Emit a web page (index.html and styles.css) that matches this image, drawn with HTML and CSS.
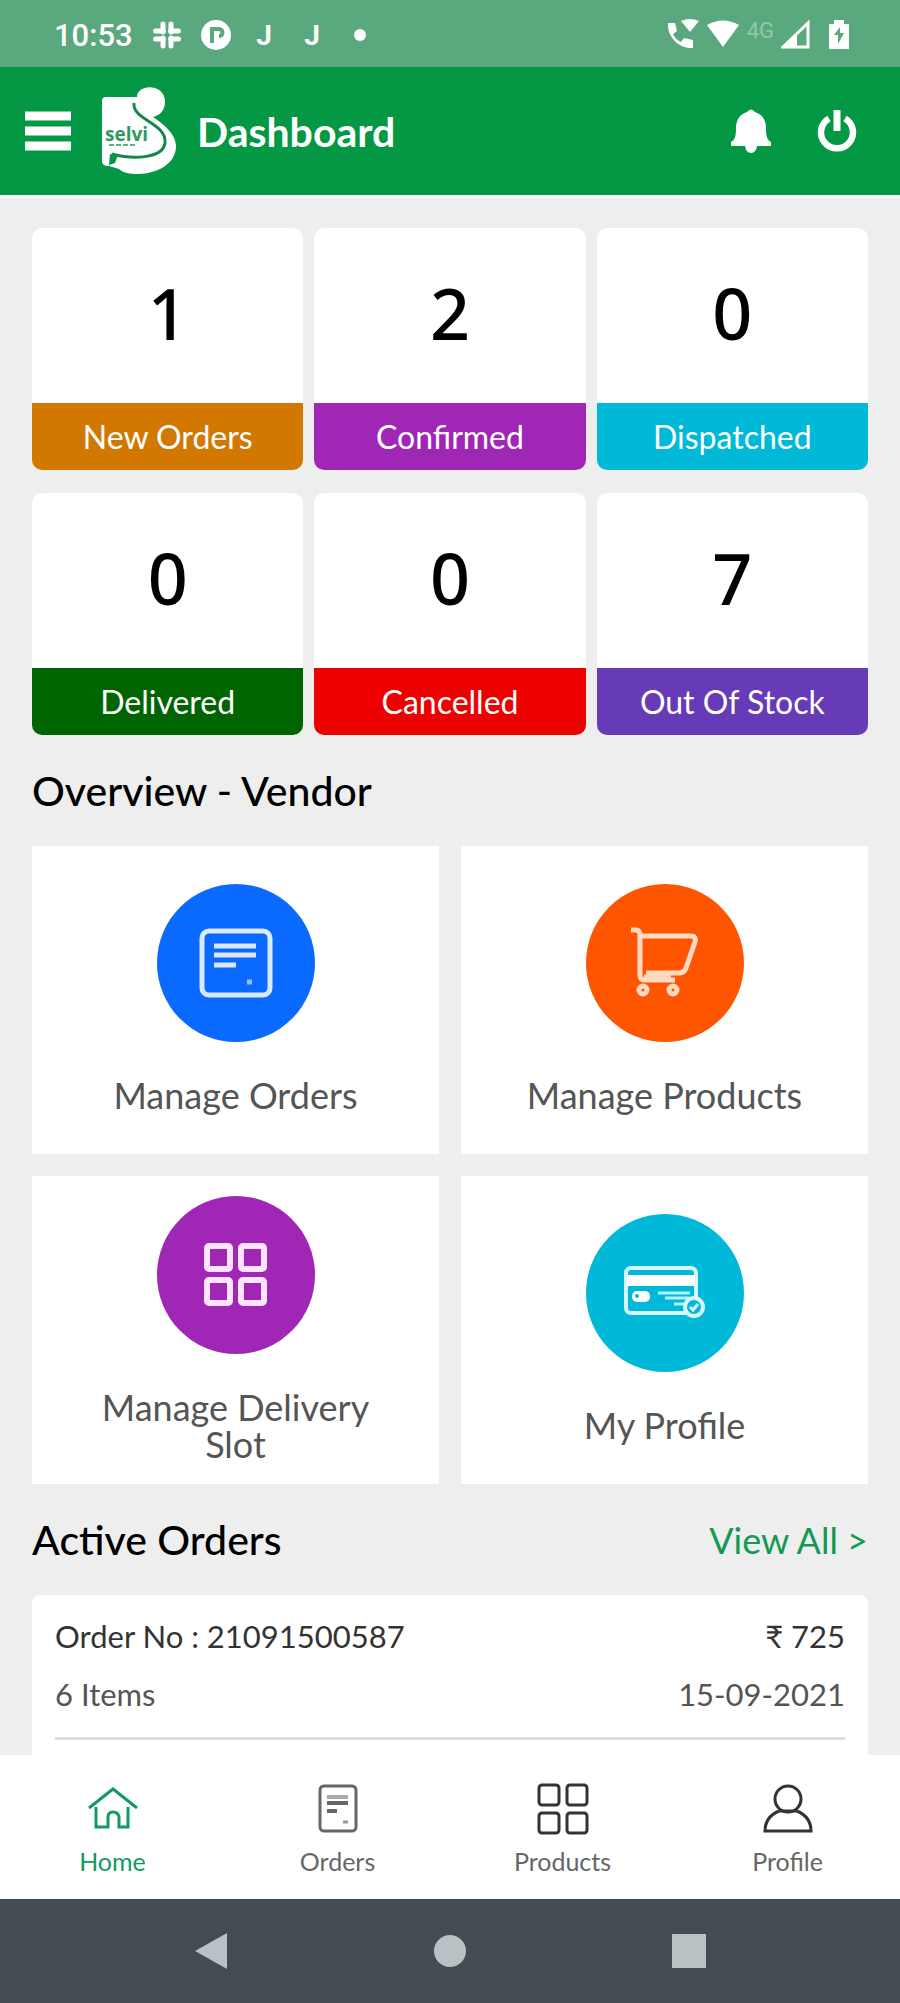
FILE: index.html
```html
<!DOCTYPE html>
<html lang="en">
<head>
<meta charset="utf-8">
<meta name="viewport" content="width=device-width, initial-scale=1">
<title>Dashboard</title>
<link rel="stylesheet" href="styles.css">
</head>
<body>
<div class="status">
  <span class="status-time">10:53</span>
  <svg class="status-icon" viewBox="0 0 30 30" aria-hidden="true"><g stroke="#fff" stroke-width="5" stroke-linecap="round"><path d="M11 4v8M19 18v8M3.500 19h8M18.500 11h8M3.500 11h8M18.500 19h8M11 18v8M19 4v8"/></g></svg>
  <svg class="status-icon" viewBox="0 0 30 30" aria-hidden="true"><circle cx="15" cy="15" r="15" fill="#fff"/><path d="M11 23V9h7a3 3 0 0 1 0 7" fill="none" stroke="#5aa87d" stroke-width="4"/></svg>
  <span class="status-letter">J</span>
  <span class="status-letter">J</span>
  <span class="status-letter"><span class="status-dot"></span></span>
  <span class="status-right">
    <svg width="32" height="32" viewBox="0 0 32 32" aria-hidden="true"><path d="M1 4h7l2 8-4 3c2 4 4 6 8 8l3-4 9 2v8C12 30 0 18 1 4z" fill="#fff"/><path d="M14 2q9-4 18 0l-9 11z" fill="#fff"/></svg>
    <svg width="34" height="32" viewBox="0 0 34 32" aria-hidden="true"><path d="M1 6Q17-3 33 6L17 28z" fill="#fff"/></svg>
    <span class="status-net">4G</span>
    <svg width="30" height="32" viewBox="0 0 30 32" aria-hidden="true"><path d="M2 28L27 4v24z" fill="none" stroke="#fff" stroke-width="3"/><path d="M2 28l14-13v13z" fill="#fff"/></svg>
    <svg class="status-battery" width="22" height="32" viewBox="0 0 22 32" aria-hidden="true"><path d="M1 5h5V1h10v4h5v25H1z" fill="#fff"/><path d="M12 8l-6 8h4v9l6-11h-4z" fill="#5aa87d"/></svg>
  </span>
</div>

<header class="appbar">
  <button class="icon-button" type="button" aria-label="Menu"><svg width="48" height="42" viewBox="0 0 48 42"><path d="M1 6h46M1 21h46M1 36h46" stroke="#fff" stroke-width="9"/></svg></button>
  <svg class="logo" width="76" height="88" viewBox="0 0 76 88" role="img" aria-label="Logo">
    <path d="M5 10h31C36-3 63-4 64 14c0 10-5 14-12 16 12 8 22 17 23 28 1 17-17 29-38 29-8 0-15-1-19-5L8 79c-4 0-7-1-7-5V14q0-4 4-4z" fill="#fff"/>
    <path d="M33 16c-2 17 33 20 31 40-2 15-30 17-53 11" fill="none" stroke="#16864a" stroke-width="3"/>
    <path d="M9 67l8 1-3 8-6 2z" fill="#049744"/>
    <text class="logo-text" x="4" y="54">selvi</text>
    <path d="M8 58h27" stroke="#5ab182" stroke-width="2" stroke-dasharray="5 2"/>
  </svg>
  <h1 class="appbar-title">Dashboard</h1>
  <button class="icon-button" type="button" aria-label="Notifications"><svg width="42" height="44" viewBox="0 0 42 44"><path d="M17 3q4-5 8 0c7 2 11 8 11 16 0 8 1 12 5 14v4H1v-4c4-2 5-6 5-14C6 11 10 5 17 3z" fill="#fff"/><path d="M15 37h12q-1 7-6 7t-6-7z" fill="#fff"/></svg></button>
  <button class="icon-button" type="button" aria-label="Log out"><svg width="42" height="44" viewBox="0 0 42 44"><path d="M13 9.500a16 16 0 1 0 16 0" fill="none" stroke="#fff" stroke-width="6.500"/><path d="M21 1v21" stroke="#fff" stroke-width="7"/></svg></button>
</header>

<main class="content">
  <section class="stats" aria-label="Order counts">
    <div class="stat"><strong class="stat-value">1</strong><span class="stat-label new">New Orders</span></div>
    <div class="stat"><strong class="stat-value">2</strong><span class="stat-label confirmed">Confirmed</span></div>
    <div class="stat"><strong class="stat-value">0</strong><span class="stat-label dispatched">Dispatched</span></div>
    <div class="stat"><strong class="stat-value">0</strong><span class="stat-label delivered">Delivered</span></div>
    <div class="stat"><strong class="stat-value">0</strong><span class="stat-label cancelled">Cancelled</span></div>
    <div class="stat"><strong class="stat-value">7</strong><span class="stat-label stock">Out Of Stock</span></div>
  </section>

  <div class="section-head"><h2 class="section-title">Overview - Vendor</h2></div>
  <nav class="tiles" aria-label="Overview">
    <a class="tile" href="#orders"><span class="disc blue"><svg width="74" height="70" viewBox="0 0 74 70" fill="none" stroke="#d9e9ff"><rect x="3" y="3" width="68" height="64" rx="7" stroke-width="5"/><path d="M15 18h42M15 27h42M15 37h22" stroke-width="5"/><path d="M48 54h5" stroke-width="5" stroke="#8fc0ff"/></svg></span>Manage Orders</a>
    <a class="tile" href="#products"><span class="disc orange"><svg width="70" height="72" viewBox="0 0 70 72" fill="none" stroke="#ffd9c2" stroke-width="5"><path d="M1 3h5q4 0 4 5v40q0 5 5 5h30"/><path d="M10 9h50q7 0 5 6L56 41q-2 5-7 5H16"/><path d="M14 51h27" stroke-width="7"/><circle cx="13" cy="63" r="4"/><circle cx="43" cy="63" r="4"/></svg></span>Manage Products</a>
    <a class="tile" href="#slots"><span class="disc purple"><svg width="64" height="64" viewBox="0 0 64 64" fill="none" stroke="#ffe3ff" stroke-width="6"><rect x="3" y="3" width="23" height="23" rx="2"/><rect x="37" y="3" width="23" height="23" rx="2"/><rect x="3" y="37" width="23" height="23" rx="2"/><rect x="37" y="37" width="23" height="23" rx="2"/></svg></span>Manage Delivery Slot</a>
    <a class="tile" href="#profile"><span class="disc cyan"><svg width="82" height="54" viewBox="0 0 82 54"><rect x="2" y="2" width="70" height="45" rx="5" fill="none" stroke="#d6f7ff" stroke-width="4"/><path d="M3 9h68v11H3z" fill="#fff"/><rect x="8" y="25" width="18" height="11" rx="5" fill="#fff"/><circle cx="13" cy="30" r="2" fill="#00b8d8"/><path d="M34 27h32M41 32h24M50 38h14" stroke="#b8f0fb" stroke-width="3"/><circle cx="70" cy="41" r="9" fill="#00b8d8" stroke="#d6f7ff" stroke-width="4"/><path d="M66 41l3 3 5-6" fill="none" stroke="#d6f7ff" stroke-width="3"/></svg></span>My Profile</a>
  </nav>

  <div class="section-head"><h2 class="section-title">Active Orders</h2><a class="view-all" href="#all">View All &gt;</a></div>
  <article class="order">
    <div class="order-body">
      <div class="order-row order-main"><span>Order No : 21091500587</span><span>₹ 725</span></div>
      <div class="order-row"><span>6 Items</span><time datetime="2021-09-15">15-09-2021</time></div>
    </div>
  </article>
</main>

<nav class="tabs" aria-label="Main">
  <a class="tab active" href="#home"><svg width="52" height="52" viewBox="0 0 52 52" fill="none" stroke="currentColor" stroke-width="3"><path d="M2 25L26 6l24 19"/><path d="M9 24v20h12V34q0-5 5-5t6 5v10h9V24"/></svg>Home</a>
  <a class="tab" href="#orders"><svg width="52" height="52" viewBox="0 0 52 52" fill="none" stroke="#666" stroke-width="3"><rect x="8" y="3" width="36" height="45" rx="4"/><path d="M15 14h21" stroke="#aaa" stroke-width="4"/><path d="M15 20h21M15 28h10" stroke-width="4"/><path d="M31 39h5" stroke="#999"/></svg>Orders</a>
  <a class="tab" href="#products"><svg width="52" height="52" viewBox="0 0 52 52" fill="none" stroke="#333" stroke-width="3"><rect x="2" y="2" width="20" height="20" rx="3"/><rect x="30" y="2" width="20" height="20" rx="3"/><rect x="2" y="30" width="20" height="20" rx="3"/><rect x="30" y="30" width="20" height="20" rx="3"/></svg>Products</a>
  <a class="tab" href="#profile"><svg width="52" height="52" viewBox="0 0 52 52" fill="none" stroke="#333" stroke-width="3"><circle cx="26" cy="16" r="13"/><path d="M17 28Q3 34 3 48h46Q49 34 35 28"/><path d="M17 28h18"/></svg>Profile</a>
</nav>

<div class="system">
  <button class="icon-button" type="button" aria-label="Back"><svg width="36" height="36" viewBox="0 0 36 36"><path d="M2 18L34 0v36z" fill="#b8c1c3"/></svg></button>
  <button class="icon-button" type="button" aria-label="Home screen"><svg width="36" height="36" viewBox="0 0 36 36"><circle cx="18" cy="18" r="16" fill="#b8c1c3"/></svg></button>
  <button class="icon-button" type="button" aria-label="Recent apps"><svg width="36" height="36" viewBox="0 0 36 36"><path d="M1 1h34v34H1z" fill="#b8c1c3"/></svg></button>
</div>
</body>
</html>
```
FILE: styles.css
```css
* { box-sizing: border-box; }

body {
  margin: 0;
  min-height: 100vh;
  display: flex;
  flex-direction: column;
  background: #eee;
  color: #000;
  font-family: Lato, "Open Sans", sans-serif;
}

a { color: inherit; text-decoration: none; }
svg { display: block; flex: none; }

.icon-button {
  padding: 0;
  border: 0;
  background: none;
  cursor: pointer;
}

.status {
  display: flex;
  align-items: center;
  gap: 19px;
  height: 67px;
  padding: 3px 50px 0 54px;
  background: #5aa87d;
  color: #fff;
  font-family: Roboto, sans-serif;
}
.status-time { font-size: 31px; font-weight: 500; }
.status-icon { width: 30px; height: 30px; }
.status-letter {
  display: flex;
  justify-content: center;
  width: 29px;
  font-size: 28px;
  font-weight: 700;
}
.status-dot { width: 12px; height: 12px; border-radius: 50%; background: #fff; }
.status-right {
  display: flex;
  align-items: center;
  gap: 7px;
  margin-left: auto;
}
.status-net { font-size: 22px; line-height: 32px; color: #90c8a8; padding-bottom: 8px; }
.status-battery { margin-left: 10px; }

.appbar {
  display: flex;
  align-items: center;
  gap: 44px;
  height: 131px;
  padding: 0 42px 0 24px;
  background: #049744;
  border-bottom: 3px solid #fff;
  color: #fff;
}
.logo { margin-left: -15px; }
.logo-text {
  fill: #2c9a60;
  font-family: "Open Sans", sans-serif;
  font-size: 19px;
  font-weight: 700;
}
.appbar-title {
  flex: 1;
  margin: 0 0 0 -24px;
  font-size: 41px;
  font-weight: 700;
}

.content {
  flex: 1;
  padding: 30px 32px 0;
}

.stats {
  display: grid;
  grid-template-columns: repeat(3, 1fr);
  gap: 23px 11px;
}
.stat {
  display: flex;
  flex-direction: column;
  overflow: hidden;
  border-radius: 10px;
  background: #fff;
  text-align: center;
}
.stat-value {
  padding-bottom: 5px;
  font-family: "Noto Sans", "Open Sans", sans-serif;
  font-size: 70px;
  font-weight: 500;
  line-height: 170px;
}
.stat-label {
  color: #fff;
  font-size: 32px;
  line-height: 67px;
}
.new { background: #d27800; }
.confirmed, .purple { background: #a027b5; }
.dispatched, .cyan { background: #00b8d8; }
.delivered { background: #006400; }
.cancelled { background: #ee0000; }
.stock { background: #673ab7; }
.blue { background: #0a69ff; }
.orange { background: #ff5500; }

.section-head {
  display: flex;
  align-items: center;
  justify-content: space-between;
  height: 111px;
}
.section-title { margin: 0; font-size: 41px; font-weight: 500; }
.view-all { color: #129a55; font-size: 36px; }

.tiles {
  display: grid;
  grid-template-columns: repeat(2, 1fr);
  grid-auto-rows: 308px;
  gap: 22px;
}
.tile {
  display: flex;
  flex-direction: column;
  align-items: center;
  justify-content: center;
  gap: 35px;
  padding: 0 56px 2px;
  background: #fff;
  color: #555;
  font-size: 36px;
  line-height: 37px;
  text-align: center;
}
.disc {
  display: grid;
  place-items: center;
  width: 158px;
  height: 158px;
  border-radius: 50%;
}

.order {
  padding: 0 23px 15px;
  border-radius: 8px 8px 0 0;
  background: #fff;
  color: #555;
  font-size: 31px;
}
.order-body {
  padding: 12px 0 14px;
  border-bottom: 3px solid #ddd;
}
.order-row {
  display: flex;
  justify-content: space-between;
  line-height: 58px;
}
.order-main { color: #333; }

.tabs {
  display: grid;
  grid-template-columns: repeat(4, 1fr);
  background: #fff;
}
.tab {
  display: flex;
  flex-direction: column;
  align-items: center;
  gap: 8px;
  padding: 28px 0 20px;
  color: #666;
  font-size: 25px;
  line-height: 36px;
}
.active { color: #129a62; }

.system {
  display: flex;
  align-items: center;
  justify-content: center;
  gap: 203px;
  height: 104px;
  background: #444c53;
}
```
